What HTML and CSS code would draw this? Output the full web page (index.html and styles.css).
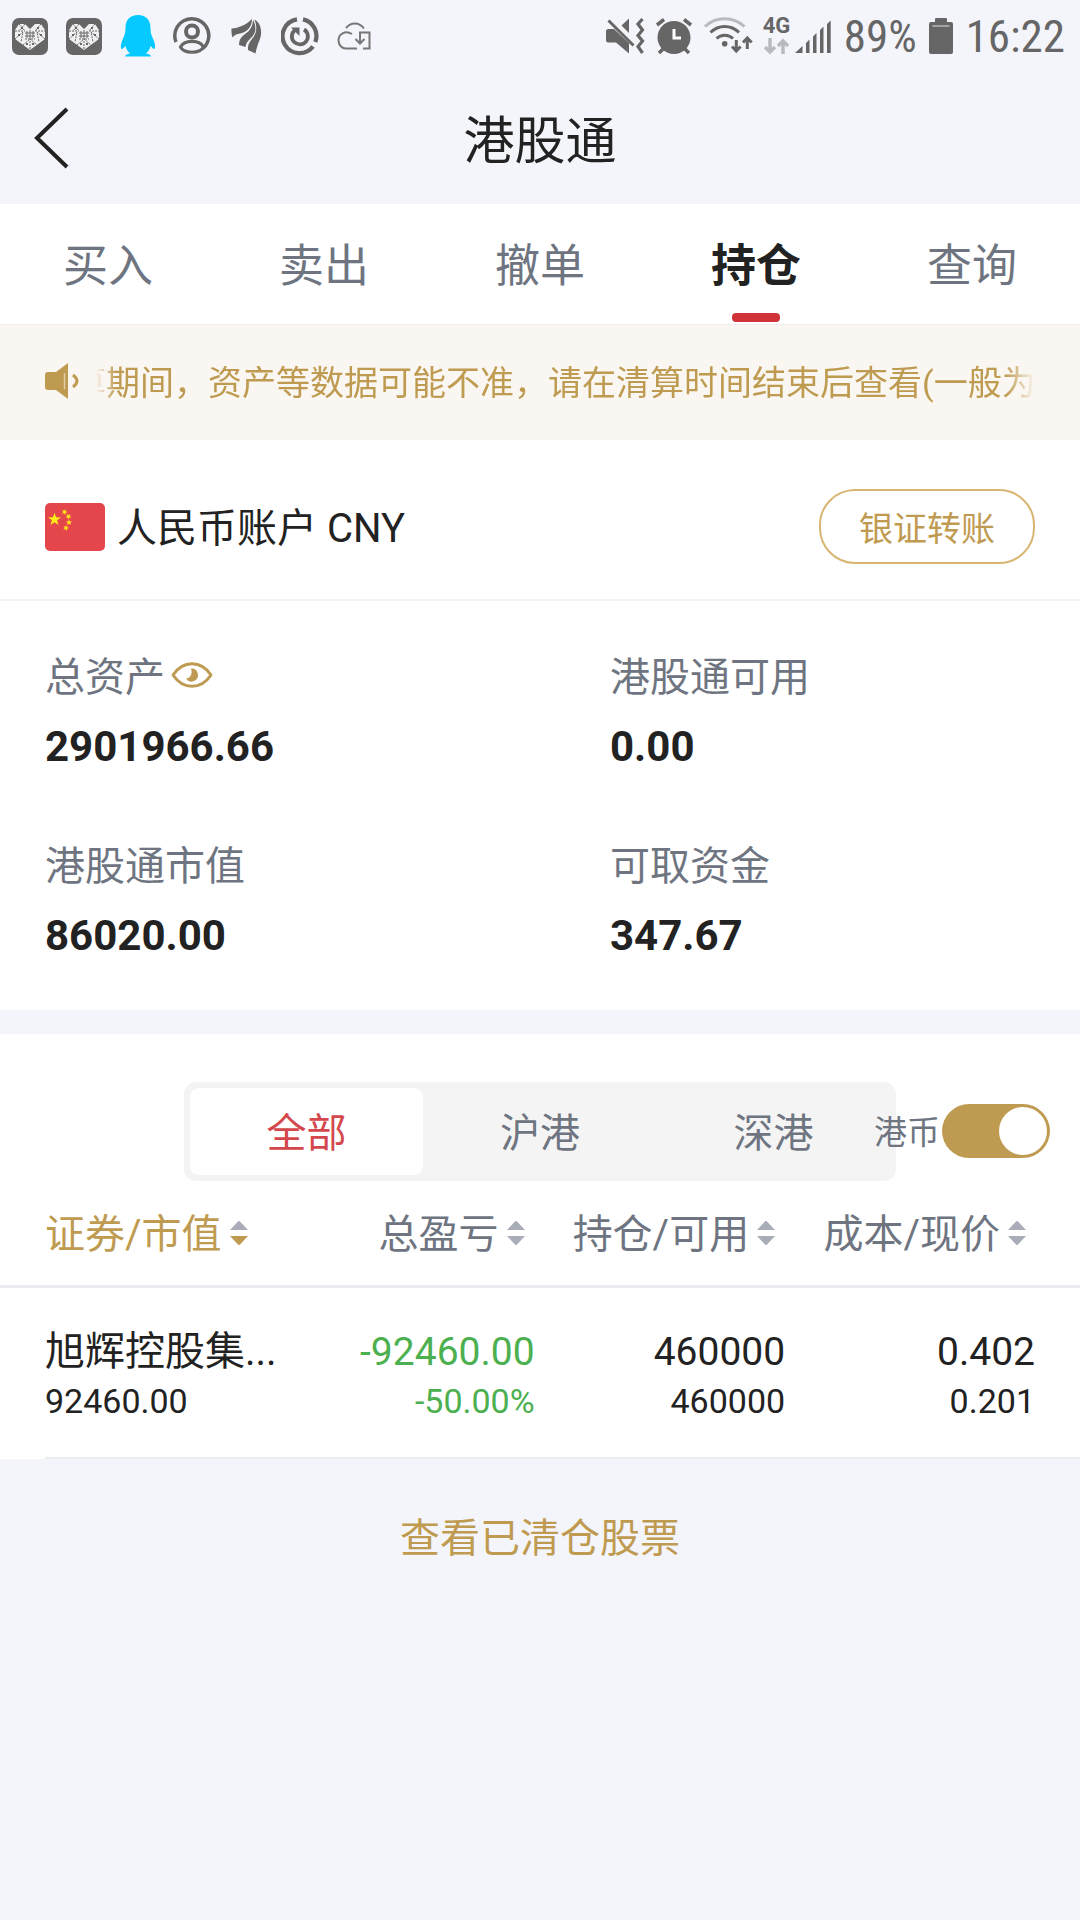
FILE: index.html
```html
<!DOCTYPE html>
<html lang="zh-CN">
<head>
    <meta charset="UTF-8">
    <meta name="viewport" content="width=device-width, initial-scale=1.0">
    <title>港股通</title>
    <link rel="stylesheet" href="styles.css">
</head>
<body>
    <!-- Status bar -->
    <div class="status-bar">
        <div class="status-left">
            <svg width="38" height="44" viewBox="0 0 38 44">
                <defs>
                    <g id="heart-app">
                        <rect x="1" y="4" width="36" height="37" rx="7" fill="#666"/>
                        <path d="M4 16L8 10H14L19 15L24 10H30L34 16V25L19 36L4 25Z" fill="#f0f0f2"/>
                        <path d="M8 10L14 17M14 10L8 17M4 17H14M30 10L24 17M24 17H34M4 25L12 18L10 28M34 25L26 18L28 28M19 27V36M12 31L19 25L26 31M14 25L24 25" stroke="#666" stroke-width="1" stroke-dasharray="2 1" fill="none"/>
                        <path d="M16 17V24M19 16V25M22 17V24M14 19H24M14 22H24" stroke="#666" stroke-width="1"/>
                        <path d="M10 13H12V15H10ZM26 13H28V15H26ZM7 20H9V22H7ZM29 20H31V22H29ZM15 29H17V31H15ZM21 29H23V31H21Z" fill="#666"/>
                    </g>
                </defs>
                <use href="#heart-app"/>
            </svg>
            <svg width="38" height="44" viewBox="0 0 38 44">
                <use href="#heart-app"/>
            </svg>
            <svg width="38" height="44" viewBox="0 0 38 44">
                <path d="M19 1C11 1 6.500 6 6.500 14C6.500 20 5 22 3 27C1.500 31 1.500 35 3 35C4 35 5 33 6.500 32C7 35 9 38 11 39.500C8 40 6 41 6 42.500H32C32 41 30 40 27 39.500C29 38 31 35 31.500 32C33 33 34 35 35 35C36.500 35 36.500 31 35 27C33 22 31.500 20 31.500 14C31.500 6 27 1 19 1Z" fill="#06c9ff"/>
            </svg>
            <svg width="38" height="44" viewBox="0 0 38 44" fill="none" stroke="#666">
                <path d="M3 28A17 17 0 1 1 30 34.500" stroke-width="3.500"/>
                <circle cx="19" cy="17.500" r="6" stroke-width="4"/>
                <path d="M7.500 33C11 25.500 27 25.500 30.500 33C27 40 11 40 7.500 33Z" stroke-width="3.200"/>
            </svg>
            <svg width="38" height="44" viewBox="0 0 38 44" fill="#666">
                <path d="M4.500 14.500C12 14 19 11 25 5C25 14 19 18.500 13 19.500C10 20 7 21 5.500 23.500C4.500 20 4.300 17 4.500 14.500Z"/>
                <path d="M26 5.500C30 14 29 20 23 25C20 27.500 19 30 18.500 33L12 31C12 26 14 23 18 20C23 17 26 12 26 5.500Z"/>
                <path d="M27.500 5.500C34 9 35.500 18 33 25C31 30 29.500 34 28.500 39.500L21 36C20.500 30 23.500 27 26.500 23C30 18 30 12 27.500 5.500Z"/>
            </svg>
            <svg width="38" height="44" viewBox="0 0 38 44" fill="none" stroke="#666">
                <path d="M16 5.300A17 17 0 1 0 32 32.500M34.300 28A17 17 0 0 0 22 5.300" stroke-width="4.300"/>
                <path d="M23 15.500A8 8 0 1 1 14 16" stroke-width="3.800"/>
                <path d="M10 13.500H18.500V22Z" fill="#666" stroke="none"/>
            </svg>
            <svg width="38" height="44" viewBox="0 0 38 44" fill="none" stroke="#777" stroke-width="2">
                <path d="M11 14C16 8 24 8 29 14.500M17 20C10 16 3.500 20 3.500 26.500C3.500 31 7 34.500 11 34.500H22M28 34.500H34.500V18.500H25V29M20.500 25L25 29.500L29.500 25"/>
            </svg>
        </div>
        <div class="status-right">
            <svg width="40" height="44" viewBox="0 0 40 44">
                <path d="M1 17C1 16 2 15 3 15H9L24 29V39.500L11 28.500H3C2 28.500 1 27.500 1 26.500ZM24 4.500V19L16.500 11.500Z" fill="#666"/>
                <path d="M3.500 6.500L28.500 31.500" stroke="#666" stroke-width="3"/>
                <path d="M37.500 5L33 10L37.500 16L33 21.500L37.500 27L33 32.500L37.500 39" fill="none" stroke="#666" stroke-width="3.200"/>
            </svg>
            <svg class="alarm-icon" width="38" height="44" viewBox="0 0 38 44" fill="none" stroke="#666" stroke-width="3.500">
                <circle cx="19" cy="23.500" r="16.500" fill="#666" stroke="none"/>
                <path d="M2 11L9 5.500M29 5.500L36 11M4 39L9 34M34 39L29 34"/>
                <path d="M19 15V24H26" stroke="#fff" stroke-width="3"/>
            </svg>
            <svg class="wifi-icon" width="50" height="44" viewBox="0 0 50 44" fill="none" stroke="#666" stroke-width="3">
                <path d="M2 12.500C13 2 30 2 41.500 12.500" stroke="#b9babe"/>
                <path d="M7.500 18.500C15.500 10.500 28 10.500 36 18.500M13.500 24.500C18 20 25.500 20 30 24.500"/>
                <circle cx="21.700" cy="29.700" r="2.800" fill="#666" stroke="none"/>
                <path d="M33.300 26V37M29 32.500L33.300 37L37.600 32.500M44.300 35V24M40 28.500L44.300 24L48.600 28.500"/>
            </svg>
            <div class="network">
                <span>4G</span>
                <svg width="28" height="17" viewBox="0 0 28 17" fill="none" stroke="#b9babe" stroke-width="3.500">
                    <path d="M7 0V14M2 9L7 14L12 9M20 16V3M15 8L20 3L25 8"/>
                </svg>
            </div>
            <svg class="signal-icon" width="37" height="44" viewBox="0 0 37 44" fill="#666">
                <path d="M0 39L7.500 32V39ZM11 39V29L14.500 25.500V39ZM18 39V22.500L21.500 19V39ZM25 39V16L28.500 12.500V39ZM32 39V10L35.700 6.500V39Z"/>
            </svg>
            <span class="battery-text">89%</span>
            <svg class="battery-icon" width="26" height="44" viewBox="0 0 26 44">
                <path d="M7 8V5Q7 4 8 4H18Q19 4 19 5V8H23Q25 8 25 10V38Q25 40 23 40H3Q1 40 1 38V10Q1 8 3 8Z" fill="#666"/>
                <path d="M4.500 12H21.500" stroke="#b9babe" stroke-width="1.500"/>
            </svg>
            <span class="clock">16:22</span>
        </div>
    </div>

    <!-- Page header -->
    <header class="header">
        <button class="back-btn" aria-label="返回">
            <svg width="36" height="64" viewBox="0 0 36 64" fill="none" stroke="#222" stroke-width="4">
                <path d="M34 3L4 32L34 61"/>
            </svg>
        </button>
        <h1>港股通</h1>
    </header>

    <nav class="tabs">
        <a href="#buy">买入</a>
        <a href="#sell">卖出</a>
        <a href="#cancel">撤单</a>
        <a href="#position" class="active">持仓</a>
        <a href="#query">查询</a>
    </nav>

    <!-- Scrolling notice -->
    <div class="notice">
        <svg width="35" height="36" viewBox="0 0 35 36">
            <path d="M3 9H11L23 0V36L11 27H3Q0 27 0 24V12Q0 9 3 9Z" fill="#bf9b51"/>
            <path d="M19.500 10V26" stroke="#e2cfa5" stroke-width="1.500"/>
            <path d="M28 12Q36 18 28 24" fill="none" stroke="#bf9b51" stroke-width="3"/>
        </svg>
        <p class="notice-text">算期间，资产等数据可能不准，请在清算时间结束后查看(一般为</p>
    </div>

    <!-- Account -->
    <section class="account">
        <svg class="flag" width="60" height="48" viewBox="0 0 60 48">
            <defs>
                <path id="star" d="M0 -10L2.350 -3.240L9.510 -3.090L3.800 1.240L5.880 8.090L0 4L-5.880 8.090L-3.800 1.240L-9.510 -3.090L-2.350 -3.240Z" fill="#ffec17"/>
            </defs>
            <rect width="60" height="48" rx="5" fill="#e5464c"/>
            <use href="#star" transform="translate(9.500 16.500) scale(.68)"/>
            <use href="#star" transform="translate(19.500 9) scale(.32) rotate(20)"/>
            <use href="#star" transform="translate(23.500 13.500) scale(.32) rotate(40)"/>
            <use href="#star" transform="translate(24 19.500) scale(.32)"/>
            <use href="#star" transform="translate(21 25) scale(.32) rotate(20)"/>
        </svg>
        <h2>人民币账户 CNY</h2>
        <button class="transfer-btn">银证转账</button>
    </section>

    <dl class="assets">
        <div>
            <dt>总资产
                <button class="eye-btn" aria-label="隐藏金额">
                    <svg width="42" height="26" viewBox="0 0 42 26">
                        <path d="M2 13C12 -2 30 -2 40 13C30 28 12 28 2 13Z" fill="none" stroke="#bf9b51" stroke-width="3" stroke-linejoin="round"/>
                        <path d="M20 6.500A6.500 6.500 0 1 1 15 16.500C19 16.500 22 12 20 6.500Z" fill="#bf9b51"/>
                    </svg>
                </button>
            </dt>
            <dd>2901966.66</dd>
        </div>
        <div>
            <dt>港股通可用</dt>
            <dd>0.00</dd>
        </div>
        <div>
            <dt>港股通市值</dt>
            <dd>86020.00</dd>
        </div>
        <div>
            <dt>可取资金</dt>
            <dd>347.67</dd>
        </div>
    </dl>

    <!-- Holdings -->
    <section class="holdings">
        <div class="filter">
            <div class="segments">
                <button class="active">全部</button>
                <button>沪港</button>
                <button>深港</button>
            </div>
            <div class="currency">
                <label for="hkd">港币</label>
                <input type="checkbox" id="hkd" class="switch" checked>
            </div>
        </div>

        <table>
            <thead>
                <tr>
                    <th class="col-name">
                        <button class="sort-btn sorted">证券/市值
                            <svg width="18" height="24" viewBox="0 0 18 24"><path class="up" d="M0 9L7.500 1Q9 -1 10.500 1L18 9Z"/><path class="down" d="M0 15H18L10.500 23Q9 25 7.500 23Z"/></svg>
                        </button>
                    </th>
                    <th class="col-profit">
                        <button class="sort-btn">总盈亏
                            <svg width="18" height="24" viewBox="0 0 18 24"><path class="up" d="M0 9L7.500 1Q9 -1 10.500 1L18 9Z"/><path class="down" d="M0 15H18L10.500 23Q9 25 7.500 23Z"/></svg>
                        </button>
                    </th>
                    <th class="col-amount">
                        <button class="sort-btn">持仓/可用
                            <svg width="18" height="24" viewBox="0 0 18 24"><path class="up" d="M0 9L7.500 1Q9 -1 10.500 1L18 9Z"/><path class="down" d="M0 15H18L10.500 23Q9 25 7.500 23Z"/></svg>
                        </button>
                    </th>
                    <th class="col-price">
                        <button class="sort-btn">成本/现价
                            <svg width="18" height="24" viewBox="0 0 18 24"><path class="up" d="M0 9L7.500 1Q9 -1 10.500 1L18 9Z"/><path class="down" d="M0 15H18L10.500 23Q9 25 7.500 23Z"/></svg>
                        </button>
                    </th>
                </tr>
            </thead>
            <tbody>
                <tr>
                    <td><div class="name">旭辉控股集...</div><div class="sub">92460.00</div></td>
                    <td class="loss"><div class="num">-92460.00</div><div class="sub">-50.00%</div></td>
                    <td><div class="num">460000</div><div class="sub">460000</div></td>
                    <td><div class="num">0.402</div><div class="sub">0.201</div></td>
                </tr>
            </tbody>
        </table>
    </section>

    <a class="cleared-link" href="#cleared">查看已清仓股票</a>
</body>
</html>
```
FILE: styles.css
```css
* {
    box-sizing: border-box;
}
body {
    margin: 0;
    background-color: #f4f5fa;
    color: #222;
    font-family: Roboto, "Noto Sans CJK SC", sans-serif;
    font-size: 40px;
    line-height: 48px;
}
button {
    padding: 0;
    border: none;
    background: none;
    color: inherit;
    font: inherit;
    cursor: pointer;
}
a {
    text-decoration: none;
}
svg {
    display: block;
    flex-shrink: 0;
}

/* Status bar */
.status-bar {
    display: flex;
    justify-content: space-between;
    height: 72px;
    padding: 0 15px 0 11px;
    color: #666;
    font-family: "Roboto Condensed", "Liberation Sans Narrow", Roboto, sans-serif;
    font-size: 45px;
}
.status-left,
.status-right {
    display: flex;
    align-items: center;
}
.status-left {
    gap: 16px;
}
.alarm-icon,
.wifi-icon,
.network {
    margin-left: 10px;
}
.signal-icon {
    margin-left: 4px;
}
.battery-text,
.clock {
    margin-left: 12px;
    padding-top: 2px;
}
.battery-icon {
    margin-left: 11px;
}
.network {
    height: 44px;
    font-family: Roboto, sans-serif;
    font-size: 22px;
    font-weight: bold;
    line-height: 24px;
}

/* Header */
.header {
    display: flex;
    align-items: center;
    height: 132px;
    padding: 0 33px;
}
.header h1 {
    flex: 1;
    margin: 0 36px 0 0;
    padding-top: 8px;
    font-size: 51px;
    font-weight: normal;
    line-height: 64px;
    text-align: center;
}

/* Tabs */
.tabs {
    display: flex;
    background-color: #fff;
}
.tabs a {
    flex: 1;
    display: flex;
    flex-direction: column;
    align-items: center;
    height: 120px;
    padding-top: 35px;
    color: #6e7581;
    font-size: 45px;
    line-height: 56px;
}
.tabs .active {
    color: #222;
    font-weight: bold;
}
.tabs .active::after {
    content: "";
    width: 48px;
    height: 9px;
    margin-top: 18px;
    border-radius: 4px;
    background-color: #d03438;
}

/* Notice */
.notice {
    display: flex;
    align-items: center;
    gap: 16px;
    height: 116px;
    padding: 0 45px;
    border-top: 1px solid #eeeeea;
    background-color: #faf6f1;
    color: #bf9b51;
}
.notice svg {
    margin-bottom: 4px;
}
.notice-text {
    flex: 1;
    margin: 0;
    overflow: hidden;
    white-space: nowrap;
    font-size: 34px;
    text-indent: -24px;
    -webkit-mask-image: linear-gradient(to right, transparent, #000 20px, #000 calc(100% - 30px), transparent);
    mask-image: linear-gradient(to right, transparent, #000 20px, #000 calc(100% - 30px), transparent);
}

/* Account */
.account {
    display: flex;
    align-items: center;
    padding: 49px 45px 35px;
    border-bottom: 2px solid #f4f4f5;
    background-color: #fff;
}
.account h2 {
    flex: 1;
    margin: 0 12px;
    padding-top: 4px;
    font-size: 40px;
    font-weight: normal;
}
.transfer-btn {
    width: 216px;
    height: 75px;
    padding-top: 4px;
    border: 2px solid #d8b671;
    border-radius: 36px;
    color: #bf9b51;
    font-size: 34px;
}

/* Assets */
.assets {
    display: grid;
    grid-template-columns: 565fr 425fr;
    row-gap: 72px;
    margin: 0 0 24px;
    padding: 53px 45px 50px;
    background-color: #fff;
}
.assets dt {
    display: flex;
    align-items: center;
    gap: 6px;
    margin-bottom: 21px;
    color: #6e7581;
}
.eye-btn {
    padding-bottom: 6px;
}
.assets dd {
    margin: 0;
    font-size: 42px;
    font-weight: bold;
}

/* Holdings */
.holdings {
    background-color: #fff;
}
.holdings::after {
    content: "";
    display: block;
    height: 2px;
    margin-left: 45px;
    background-color: #ebecee;
}
.filter {
    position: relative;
    padding-top: 48px;
}
.segments {
    display: grid;
    grid-template-columns: repeat(3, 1fr);
    width: 66%;
    margin: 0 auto;
    padding: 6px;
    border-radius: 12px;
    background-color: #f4f4f4;
}
.segments button {
    height: 87px;
    padding-top: 4px;
    border-radius: 9px;
    color: #6e7581;
}
.segments .active {
    background-color: #fff;
    color: #d4474d;
}
/* sits over the right end of the segments */
.currency {
    position: absolute;
    right: 30px;
    top: 70px;
    display: flex;
    align-items: center;
    gap: 2px;
    color: #6e7581;
    font-size: 33px;
}
.currency label {
    padding-top: 4px;
}
.switch {
    appearance: none;
    width: 108px;
    height: 54px;
    margin: 0;
    padding: 3px;
    border-radius: 27px;
    background-color: #d0d0d0;
}
.switch::before {
    content: "";
    display: block;
    width: 48px;
    height: 48px;
    border-radius: 50%;
    background-color: #fff;
}
.switch:checked {
    background-color: #bf9b51;
}
.switch:checked::before {
    margin-left: auto;
}

table {
    width: 100%;
    border-collapse: collapse;
    table-layout: fixed;
}
.col-name {
    width: 27%;
}
.col-profit {
    width: 22.5%;
}
.col-amount {
    width: 23.2%;
}
th {
    padding: 30px 10px 26px 0;
    border-bottom: 3px solid #ecedf2;
    color: #6e7581;
    font-weight: normal;
    text-align: right;
}
td {
    padding: 40px 0 35px;
    text-align: right;
}
th:first-child,
td:first-child {
    padding-left: 45px;
    text-align: left;
}
th:last-child {
    padding-right: 54px;
}
td:last-child {
    padding-right: 45px;
}
.sort-btn {
    display: inline-flex;
    align-items: center;
    gap: 8px;
    vertical-align: top;
    white-space: nowrap;
}
.sort-btn svg {
    margin-bottom: 4px;
}
.sort-btn .up,
.sort-btn .down {
    fill: #a9adb7;
}
.sorted {
    color: #bf9b51;
}
.sorted .down {
    fill: #bf9b51;
}
.num {
    font-size: 39px;
}
.sub {
    margin-top: 4px;
    font-size: 34px;
    line-height: 42px;
}
.loss {
    color: #4caf50;
}

.cleared-link {
    display: block;
    padding: 56px 0;
    color: #bf9b51;
    text-align: center;
}
```
